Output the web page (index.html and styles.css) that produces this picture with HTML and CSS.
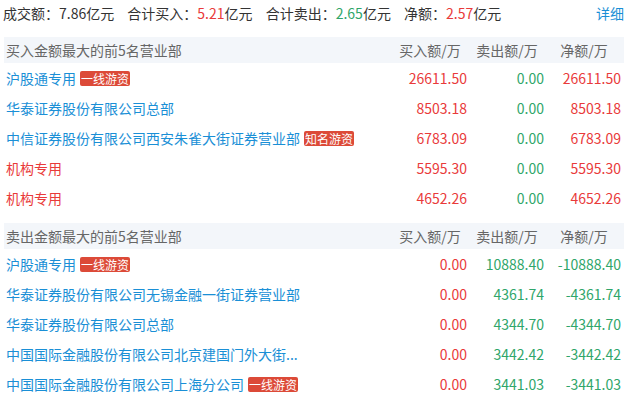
FILE: index.html
```html
<!DOCTYPE html>
<html lang="zh-CN">
<head>
<meta charset="utf-8">
<title>龙虎榜</title>
<link rel="stylesheet" href="styles.css">
</head>
<body>
<div class="wrap">
  <div class="summary">
    <div class="stats">
      <span class="stat">成交额：<span class="dark">7.86</span>亿元</span>
      <span class="stat">合计买入：<span class="red">5.21</span>亿元</span>
      <span class="stat">合计卖出：<span class="green">2.65</span>亿元</span>
      <span class="stat">净额：<span class="red">2.57</span>亿元</span>
    </div>
    <a class="more">详细</a>
  </div>

  <div class="table">
    <div class="row head">
      <div class="name">买入金额最大的前5名营业部</div>
      <div class="num">买入额/万</div>
      <div class="num">卖出额/万</div>
      <div class="num">净额/万</div>
    </div>
    <div class="row">
      <div class="name"><span class="blue">沪股通专用</span><span class="tag">一线游资</span></div>
      <div class="num red">26611.50</div>
      <div class="num green">0.00</div>
      <div class="num red">26611.50</div>
    </div>
    <div class="row">
      <div class="name"><span class="blue">华泰证券股份有限公司总部</span></div>
      <div class="num red">8503.18</div>
      <div class="num green">0.00</div>
      <div class="num red">8503.18</div>
    </div>
    <div class="row">
      <div class="name"><span class="blue">中信证券股份有限公司西安朱雀大街证券营业部</span><span class="tag">知名游资</span></div>
      <div class="num red">6783.09</div>
      <div class="num green">0.00</div>
      <div class="num red">6783.09</div>
    </div>
    <div class="row">
      <div class="name"><span class="red">机构专用</span></div>
      <div class="num red">5595.30</div>
      <div class="num green">0.00</div>
      <div class="num red">5595.30</div>
    </div>
    <div class="row">
      <div class="name"><span class="red">机构专用</span></div>
      <div class="num red">4652.26</div>
      <div class="num green">0.00</div>
      <div class="num red">4652.26</div>
    </div>
  </div>

  <div class="table second">
    <div class="row head">
      <div class="name">卖出金额最大的前5名营业部</div>
      <div class="num">买入额/万</div>
      <div class="num">卖出额/万</div>
      <div class="num">净额/万</div>
    </div>
    <div class="row">
      <div class="name"><span class="blue">沪股通专用</span><span class="tag">一线游资</span></div>
      <div class="num red">0.00</div>
      <div class="num green">10888.40</div>
      <div class="num green">-10888.40</div>
    </div>
    <div class="row">
      <div class="name"><span class="blue">华泰证券股份有限公司无锡金融一街证券营业部</span></div>
      <div class="num red">0.00</div>
      <div class="num green">4361.74</div>
      <div class="num green">-4361.74</div>
    </div>
    <div class="row">
      <div class="name"><span class="blue">华泰证券股份有限公司总部</span></div>
      <div class="num red">0.00</div>
      <div class="num green">4344.70</div>
      <div class="num green">-4344.70</div>
    </div>
    <div class="row">
      <div class="name"><span class="blue">中国国际金融股份有限公司北京建国门外大街...</span></div>
      <div class="num red">0.00</div>
      <div class="num green">3442.42</div>
      <div class="num green">-3442.42</div>
    </div>
    <div class="row">
      <div class="name"><span class="blue">中国国际金融股份有限公司上海分公司</span><span class="tag">一线游资</span></div>
      <div class="num red">0.00</div>
      <div class="num green">3441.03</div>
      <div class="num green">-3441.03</div>
    </div>
  </div>
</div>
</body>
</html>
```

FILE: styles.css
```css
* { box-sizing: border-box; }
html, body { margin: 0; padding: 0; background: #fff; }
body {
  font-family: "Noto Sans CJK SC", "Microsoft YaHei", sans-serif;
  font-size: 14px;
  color: #333;
  overflow: hidden;
}
.wrap { padding: 0 4px; }
.summary {
  display: flex;
  justify-content: space-between;
  align-items: center;
  height: 25px;
  margin-left: -1px;
}
.stat { margin-right: 10px; }
.more { color: #1a8fd6; text-decoration: none; }
.dark { color: #333; }
.red { color: #e93a3a; }
.green { color: #2fa66a; }
.blue { color: #1a8fd6; }
.table { margin-top: 12px; }
.table.second { margin-top: 10px; }
.row {
  display: grid;
  grid-template-columns: 1fr 77px 77px 77px;
  height: 30px;
  align-items: center;
}
.row.head {
  height: 26px;
  background: #f3f6fa;
  color: #666;
}
.row.head .num { text-align: center; }
.name {
  padding-left: 2px;
  white-space: nowrap;
  display: flex;
  align-items: center;
}
.num {
  text-align: right;
  padding-right: 3px;
  white-space: nowrap;
}
.tag {
  display: inline-block;
  margin-left: 4px;
  background: #dc4a38;
  color: #fff;
  font-size: 12px;
  line-height: 15px;
  height: 15px;
  padding: 0 1px;
  border-radius: 2px;
}
```
